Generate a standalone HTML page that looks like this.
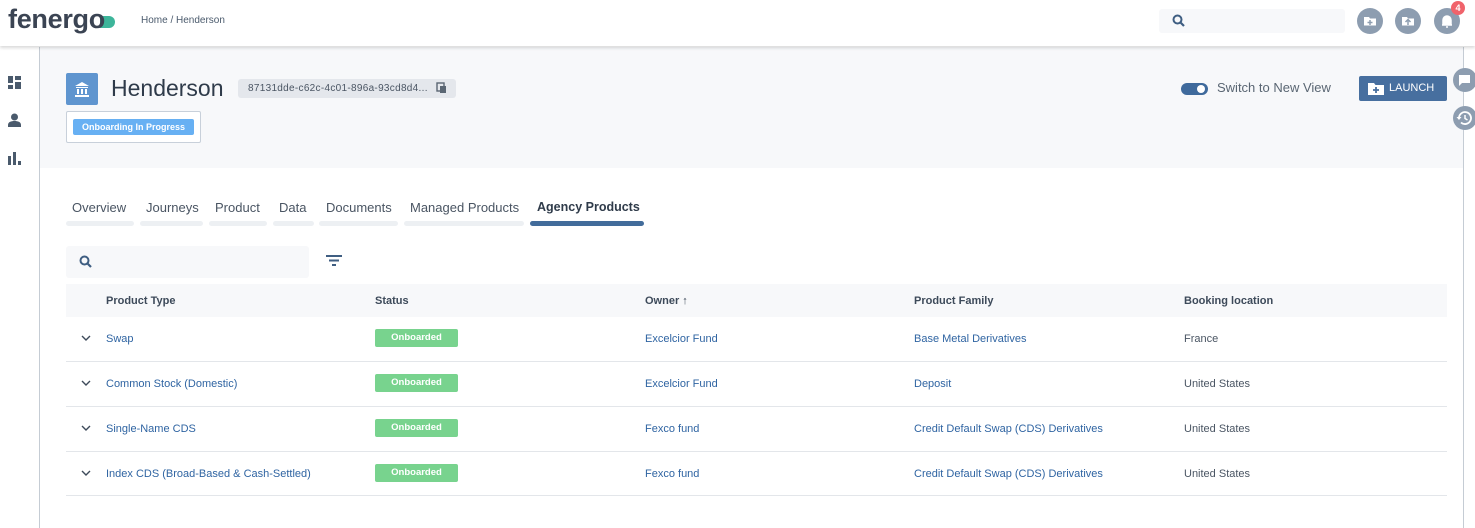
<!DOCTYPE html>
<html><head><meta charset="utf-8"><style>
*{box-sizing:border-box;margin:0;padding:0}
body{width:1475px;height:528px;overflow:hidden;background:#fff;font-family:"Liberation Sans",sans-serif;color:#3d4a5a;position:relative}
.abs{position:absolute}
.hdr{left:0;top:0;width:1475px;height:46px;background:#fff;box-shadow:0 2px 3px rgba(0,0,0,.15);z-index:3}
.side{left:0;top:47px;width:40px;height:481px;border-right:1px solid #c5ccd4;background:#fff}
.gray{left:40px;top:47px;width:1423px;height:121px;background:#f7f8fa}
.rline{left:1463px;top:47px;width:1px;height:481px;background:#c5ccd4}
.circ{width:26px;height:26px;border-radius:50%;background:#8d9db0}
.tab{top:200px;font-size:13px;color:#4a5563}
.bar{top:221px;height:5px;border-radius:3px;background:#edf0f3}
.th{top:294px;font-size:11px;font-weight:bold;color:#3d4a5a}
.td{font-size:11px;color:#2f64a2}
.tdg{font-size:11px;color:#4a5563}
.badge{width:83px;height:18px;background:#78d38e;border-radius:2px;color:#fff;font-size:9.5px;font-weight:bold;text-align:center;line-height:18px}
.sep{left:66px;width:1381px;height:1px;background:#e3e6ea}
</style></head><body>
<div class="abs hdr">
  <div class="abs" style="left:100px;top:16px;width:15px;height:12px;border-radius:0 6px 6px 0;background:#3db59a"></div>
  <div class="abs" style="left:8px;top:4px;font-size:27px;font-weight:bold;color:#3b4453;letter-spacing:-0.3px">fenergo</div>
  <div class="abs" style="left:141px;top:15px;font-size:10px;color:#4a5a6c">Home / Henderson</div>
  <div class="abs" style="left:1159px;top:9px;width:186px;height:24px;background:#f7f8fa;border-radius:3px"></div>
  <svg class="abs" style="left:1172px;top:14px" width="13" height="13" viewBox="0 0 13 13"><circle cx="5.5" cy="5.5" r="4" stroke="#3f5e82" stroke-width="2" fill="none"/><path d="M8.5 8.5L12 12" stroke="#3f5e82" stroke-width="2.2"/></svg>
  <div class="abs circ" style="left:1357px;top:8px"><svg width="26" height="26"><path d="M7 9h5l1 1.5h6v7H7z" fill="#fff"/><path d="M13 12v5M10.5 14.5h5" stroke="#8d9db0" stroke-width="1.5"/></svg></div>
  <div class="abs circ" style="left:1395px;top:8px"><svg width="26" height="26"><path d="M7 9h5l1 1.5h6v7H7z" fill="#fff"/><path d="M13 17v-5M10.5 14l2.5-2.5 2.5 2.5" stroke="#8d9db0" stroke-width="1.5" fill="none"/></svg></div>
  <div class="abs circ" style="left:1434px;top:8px"><svg width="26" height="26"><path d="M9 17v-5a4 4 0 018 0v5zM8 17h10M12 19h2" stroke="#fff" stroke-width="1.5" fill="#fff"/></svg></div>
  <div class="abs" style="left:1451px;top:1px;width:14px;height:14px;border-radius:50%;background:#f0636b;color:#fff;font-size:9px;text-align:center;line-height:14px;font-weight:bold">4</div>
</div>
<div class="abs side">
  <svg class="abs" style="left:8px;top:29px" width="13" height="13"><rect x="0" y="0" width="5" height="7" fill="#4a5a6c"/><rect x="7" y="0" width="6" height="4" fill="#4a5a6c"/><rect x="0" y="9" width="5" height="4" fill="#4a5a6c"/><rect x="7" y="6" width="6" height="7" fill="#4a5a6c"/></svg>
  <svg class="abs" style="left:8px;top:66px" width="13" height="14"><circle cx="6.5" cy="4" r="3.5" fill="#4a5a6c"/><path d="M0 14v-2c0-3 3-4 6.5-4s6.5 1 6.5 4v2z" fill="#4a5a6c"/></svg>
  <svg class="abs" style="left:8px;top:105px" width="13" height="13"><rect x="0" y="4" width="3" height="9" fill="#4a5a6c"/><rect x="5" y="0" width="3" height="13" fill="#4a5a6c"/><rect x="10" y="9" width="3" height="4" fill="#4a5a6c"/></svg>
</div>
<div class="abs gray"></div>
<div class="abs rline"></div>
<div class="abs" style="left:1453px;top:68px;width:24px;height:24px;border-radius:50%;background:#8d9db0"><svg width="24" height="24"><path d="M6 7h11v8H9l-3 3z" fill="#fff"/></svg></div>
<div class="abs" style="left:1453px;top:106px;width:24px;height:24px;border-radius:50%;background:#8d9db0"><svg width="24" height="24"><path d="M6 12a6 6 0 1 1 2 4.5" stroke="#fff" stroke-width="1.8" fill="none"/><path d="M12 9v3.5l2.5 1.5" stroke="#fff" stroke-width="1.5" fill="none"/><path d="M3.5 11h5l-2.5 3z" fill="#fff"/></svg></div>

<div class="abs" style="left:66px;top:73px;width:32px;height:32px;background:#5f95cf;border-radius:2px"><svg width="32" height="32"><path d="M9 13l7-4 7 4zM10 14h12v1H10zM11 16h2v5h-2zM15 16h2v5h-2zM19 16h2v5h-2zM9 22h14v2H9z" fill="#fff"/></svg></div>
<div class="abs" style="left:111px;top:75px;font-size:23px;color:#2f3b4a">Henderson</div>
<div class="abs" style="left:238px;top:79px;width:218px;height:19px;background:#e4e7ec;border-radius:3px;font-size:10px;color:#4a5563;line-height:19px;padding-left:10px;letter-spacing:0.3px">87131dde-c62c-4c01-896a-93cd8d4...</div>
<svg class="abs" style="left:436px;top:82px" width="12" height="13"><rect x="1" y="1" width="7" height="8" stroke="#5a6673" stroke-width="1.4" fill="none"/><rect x="4" y="4" width="6" height="7" fill="#5a6673"/></svg>
<div class="abs" style="left:66px;top:111px;width:135px;height:32px;border:1px solid #c8d0da;border-radius:2px;background:#fff"></div>
<div class="abs" style="left:73px;top:119px;width:121px;height:16px;background:#67b0f3;border-radius:2px;color:#fff;font-size:9px;font-weight:bold;text-align:center;line-height:16px">Onboarding In Progress</div>

<div class="abs" style="left:1181px;top:83px;width:27px;height:12px;border-radius:6px;background:#3f6a9c"><div class="abs" style="left:16px;top:2px;width:8px;height:8px;border-radius:50%;background:#fff"></div></div>
<div class="abs" style="left:1217px;top:80px;font-size:13px;color:#5a6673">Switch to New View</div>
<div class="abs" style="left:1359px;top:76px;width:88px;height:25px;background:#476f9f;border-radius:2px;color:#fff;font-size:11px;line-height:25px"><svg class="abs" style="left:9px;top:6px" width="16" height="13"><path d="M0 1h6l1.5 2H16v10H0z" fill="#fff"/><path d="M8 5v6M5 8h6" stroke="#476f9f" stroke-width="1.8"/></svg><span class="abs" style="left:30px">LAUNCH</span></div>

<div class="abs tab" style="left:72px">Overview</div>
<div class="abs tab" style="left:146px">Journeys</div>
<div class="abs tab" style="left:215px">Product</div>
<div class="abs tab" style="left:279px">Data</div>
<div class="abs tab" style="left:326px">Documents</div>
<div class="abs tab" style="left:410px">Managed Products</div>
<div class="abs tab" style="left:537px;color:#2f3b4a;font-weight:bold;font-size:12.5px">Agency Products</div>
<div class="abs bar" style="left:66px;width:68px"></div>
<div class="abs bar" style="left:140px;width:63px"></div>
<div class="abs bar" style="left:209px;width:58px"></div>
<div class="abs bar" style="left:273px;width:41px"></div>
<div class="abs bar" style="left:319px;width:79px"></div>
<div class="abs bar" style="left:404px;width:120px"></div>
<div class="abs bar" style="left:530px;width:114px;background:#426c9b"></div>

<div class="abs" style="left:66px;top:246px;width:243px;height:32px;background:#f7f8fa;border-radius:3px"></div>
<svg class="abs" style="left:79px;top:255px" width="13" height="13" viewBox="0 0 13 13"><circle cx="5.5" cy="5.5" r="4" stroke="#3f5e82" stroke-width="2" fill="none"/><path d="M8.5 8.5L12 12" stroke="#3f5e82" stroke-width="2.2"/></svg>
<svg class="abs" style="left:326px;top:255px" width="16" height="12"><path d="M0 1h16M3 5.5h10M6 10h4" stroke="#3f5e82" stroke-width="2"/></svg>

<div class="abs" style="left:66px;top:284px;width:1381px;height:33px;background:#f7f8fa"></div>
<div class="abs th" style="left:106px;top:295px">Product Type</div>
<div class="abs th" style="left:375px;top:295px">Status</div>
<div class="abs th" style="left:645px;top:295px">Owner <span style="font-weight:normal">&#8593;</span></div>
<div class="abs th" style="left:914px;top:295px">Product Family</div>
<div class="abs th" style="left:1184px;top:295px">Booking location</div>

<svg class="abs" style="left:81px;top:335px" width="10" height="7"><path d="M1 1l4 4 4-4" stroke="#3d4a5a" stroke-width="1.4" fill="none"/></svg>
<div class="abs td" style="left:106px;top:333px">Swap</div>
<div class="abs badge" style="left:375px;top:329px">Onboarded</div>
<div class="abs td" style="left:645px;top:333px">Excelcior Fund</div>
<div class="abs td" style="left:914px;top:333px">Base Metal Derivatives</div>
<div class="abs tdg" style="left:1184px;top:333px">France</div>
<div class="abs sep" style="top:361px"></div>

<svg class="abs" style="left:81px;top:380px" width="10" height="7"><path d="M1 1l4 4 4-4" stroke="#3d4a5a" stroke-width="1.4" fill="none"/></svg>
<div class="abs td" style="left:106px;top:378px">Common Stock (Domestic)</div>
<div class="abs badge" style="left:375px;top:374px">Onboarded</div>
<div class="abs td" style="left:645px;top:378px">Excelcior Fund</div>
<div class="abs td" style="left:914px;top:378px">Deposit</div>
<div class="abs tdg" style="left:1184px;top:378px">United States</div>
<div class="abs sep" style="top:406px"></div>

<svg class="abs" style="left:81px;top:425px" width="10" height="7"><path d="M1 1l4 4 4-4" stroke="#3d4a5a" stroke-width="1.4" fill="none"/></svg>
<div class="abs td" style="left:106px;top:423px">Single-Name CDS</div>
<div class="abs badge" style="left:375px;top:419px">Onboarded</div>
<div class="abs td" style="left:645px;top:423px">Fexco fund</div>
<div class="abs td" style="left:914px;top:423px">Credit Default Swap (CDS) Derivatives</div>
<div class="abs tdg" style="left:1184px;top:423px">United States</div>
<div class="abs sep" style="top:451px"></div>

<svg class="abs" style="left:81px;top:470px" width="10" height="7"><path d="M1 1l4 4 4-4" stroke="#3d4a5a" stroke-width="1.4" fill="none"/></svg>
<div class="abs td" style="left:106px;top:468px">Index CDS (Broad-Based &amp; Cash-Settled)</div>
<div class="abs badge" style="left:375px;top:464px">Onboarded</div>
<div class="abs td" style="left:645px;top:468px">Fexco fund</div>
<div class="abs td" style="left:914px;top:468px">Credit Default Swap (CDS) Derivatives</div>
<div class="abs tdg" style="left:1184px;top:468px">United States</div>
<div class="abs sep" style="top:495px"></div>
</body></html>
